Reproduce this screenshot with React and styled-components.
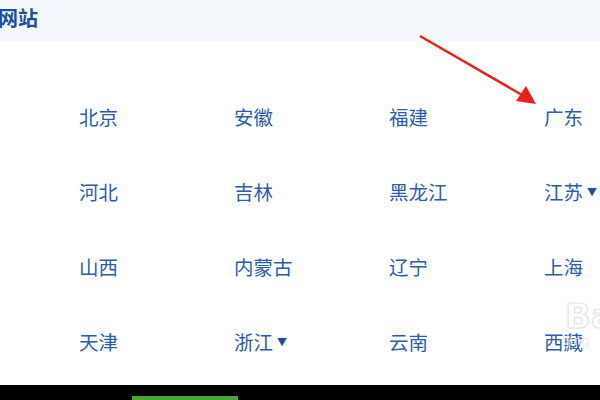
import React from 'react';
import styled, { createGlobalStyle } from 'styled-components';

const GlobalStyle = createGlobalStyle`
  html, body {
    margin: 0;
    padding: 0;
    background: #fff;
    overflow: hidden;
  }
  body {
    font-family: "Noto Sans CJK SC", sans-serif;
  }
`

const Page = styled.div`
  position: relative;
  width: 600px;
  height: 400px;
  display: flex;
  flex-direction: column;
  overflow: hidden;
  background: #fff;
`

const Header = styled.div`
  flex-shrink: 0;
  height: 41px;
  background: #f4f7fc;
  display: flex;
  align-items: center;
  margin-left: -2px;
`

const Title = styled.h2`
  margin: 0 0 6px 0;
  font-size: 20px;
  font-weight: 700;
  color: #1d4fa0;
  font-family: "Noto Sans CJK SC", sans-serif;
`

const Grid = styled.div`
  flex: 1;
  min-height: 0;
  overflow: hidden;
  display: grid;
  grid-template-columns: repeat(4, 155px);
  grid-auto-rows: 75px;
  padding: 64px 0 0 79px;
`

const Cell = styled.a`
  display: flex;
  align-items: flex-start;
  gap: 4px;
  font-size: 19.5px;
  line-height: 24px;
  color: #2f5ca8;
  text-decoration: none;
  white-space: nowrap;
  font-family: "Noto Sans CJK SC", sans-serif;
`

const Caret = styled.span`
  font-size: 10px;
  line-height: 24px;
  color: #1d4fa0;
`

const Footer = styled.div`
  flex-shrink: 0;
  height: 15px;
  background: #000;
  display: flex;
  align-items: flex-end;
  padding-left: 132px;
`

const Tab = styled.div`
  width: 106px;
  height: 4px;
  background: #4aa43a;
`

const Arrow = styled.svg`
  position: absolute;
  left: 0;
  top: 0;
  pointer-events: none;
`

const Watermark = styled.div`
  position: absolute;
  left: 565px;
  top: 298px;
  font-family: "DejaVu Sans", sans-serif;
  font-weight: 700;
  font-size: 34px;
  line-height: 36px;
  color: transparent;
  -webkit-text-stroke: 1.2px #e2e2e2;
`

const WatermarkSub = styled.div`
  position: absolute;
  left: 566px;
  top: 333px;
  font-family: "DejaVu Sans", sans-serif;
  font-size: 13px;
  color: #ececec;
`

const rows = [
  ['北京', '安徽', '福建', '广东'],
  ['河北', '吉林', '黑龙江', '江苏▾'],
  ['山西', '内蒙古', '辽宁', '上海'],
  ['天津', '浙江▾', '云南', '西藏'],
];

export default function App() {
  return (
    <Page>
      <GlobalStyle />
      <Header>
        <Title>网站</Title>
      </Header>
      <Grid>
        {rows.flat().map((name, i) => {
          const drop = name.endsWith('▾');
          return (
            <Cell key={i} href="#">
              {drop ? name.slice(0, -1) : name}
              {drop && <Caret>▼</Caret>}
            </Cell>
          );
        })}
      </Grid>
      <Footer>
        <Tab />
      </Footer>
      <Watermark>Ba</Watermark>
      <WatermarkSub>jing</WatermarkSub>
      <Arrow width="600" height="400" viewBox="0 0 600 400">
        <line x1="420" y1="36" x2="522" y2="95" stroke="#e8211c" strokeWidth="2.5" />
        <polygon points="536,104 516,101 526,86" fill="#e8211c" />
      </Arrow>
    </Page>
  );
}
